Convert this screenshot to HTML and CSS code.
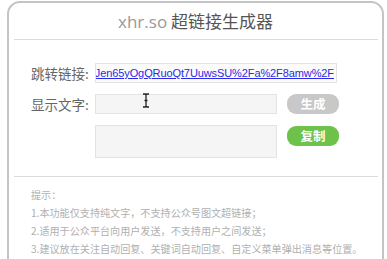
FILE: index.html
```html
<!DOCTYPE html>
<html lang="zh-CN">
<head>
<meta charset="utf-8">
<title>xhr.so 超链接生成器</title>
<link rel="stylesheet" href="styles.css">
</head>
<body>
<div class="card">
  <div class="head"><span class="brand">xhr.so</span> 超链接生成器</div>
  <div class="rule"></div>
  <div class="form">
    <div class="label">跳转链接:</div>
    <div class="field link-field"><a class="link" href="#">Jen65yOgQRuoQt7UuwsSU%2Fa%2F8amw%2F</a></div>
    <div class="label">显示文字:</div>
    <div class="field text-field"></div>
    <div class="btn gray">生成</div>
    <div class="label"></div>
    <div class="field area"></div>
    <div class="btn green">复制</div>
  </div>
  <div class="rule rule2"></div>
  <div class="tips">
    <div>提示：</div>
    <div>1.本功能仅支持纯文字，不支持公众号图文超链接；</div>
    <div>2.适用于公众平台向用户发送，不支持用户之间发送；</div>
    <div>3.建议放在关注自动回复、关键词自动回复、自定义菜单弹出消息等位置。</div>
  </div>
  <svg class="cursor" width="8" height="15" viewBox="0 0 8 15"><path d="M1 1h2.2L4 2l.8-1H7M4 2v11M1 14h2.2L4 13l.8 1H7M2.5 7.5h3" fill="none" stroke="#222" stroke-width="1.3"/></svg>
</div>
</body>
</html>
```
FILE: styles.css
```css
html, body { margin: 0; padding: 0; background: #fff; }
body { font-family: "Noto Sans CJK SC", "Noto Sans", sans-serif; overflow: hidden; }
.card {
  position: relative;
  margin: 1px 3px 0 7px;
  height: 300px;
  border: 2px solid #c4c4c4;
  border-radius: 13px;
  box-sizing: border-box;
}
.head {
  height: 36px;
  line-height: 36px;
  text-align: center;
  font-size: 17px;
  color: #555;
}
.brand { font-family: "Open Sans", "Noto Sans", sans-serif; color: #999; }
.rule { height: 1px; background: #dcdcdc; margin: 0 4px 0 5px; }
.form {
  display: grid;
  grid-template-columns: 64px 182px 62px;
  row-gap: 11px;
  padding: 23px 0 0 22px;
  align-items: start;
}
.label {
  font-size: 13.5px;
  color: #666;
  line-height: 20px;
  white-space: nowrap;
}
.field {
  height: 20px;
  box-sizing: border-box;
  border: 1px solid #e3e3e3;
  background: #f5f5f5;
}
.link-field {
  grid-column: 2 / 4;
  width: 242px;
  background: #fbfbfb;
  display: flex;
  justify-content: flex-end;
  overflow: hidden;
  white-space: nowrap;
  padding-right: 2px;
}
.link {
  font-family: "Liberation Sans", Arial, sans-serif;
  font-size: 11px;
  letter-spacing: -0.1px;
  line-height: 18px;
  color: #2a2ae6;
}
.area { height: 33px; }
.btn {
  width: 52px;
  margin-left: 10px;
  height: 20px;
  line-height: 20px;
  border-radius: 9px;
  text-align: center;
  color: #fff;
  font-size: 12.5px;
  font-weight: bold;
}
.gray { background: #c8c8c8; }
.green { background: #6cc24a; margin-top: 1px; }
.rule2 { margin-top: 18px; }
.tips {
  padding: 9px 0 0 22px;
  font-size: 10.1px;
  line-height: 18px;
  color: #b0b0b0;
}
.cursor { position: absolute; left: 133px; top: 90px; }
```
